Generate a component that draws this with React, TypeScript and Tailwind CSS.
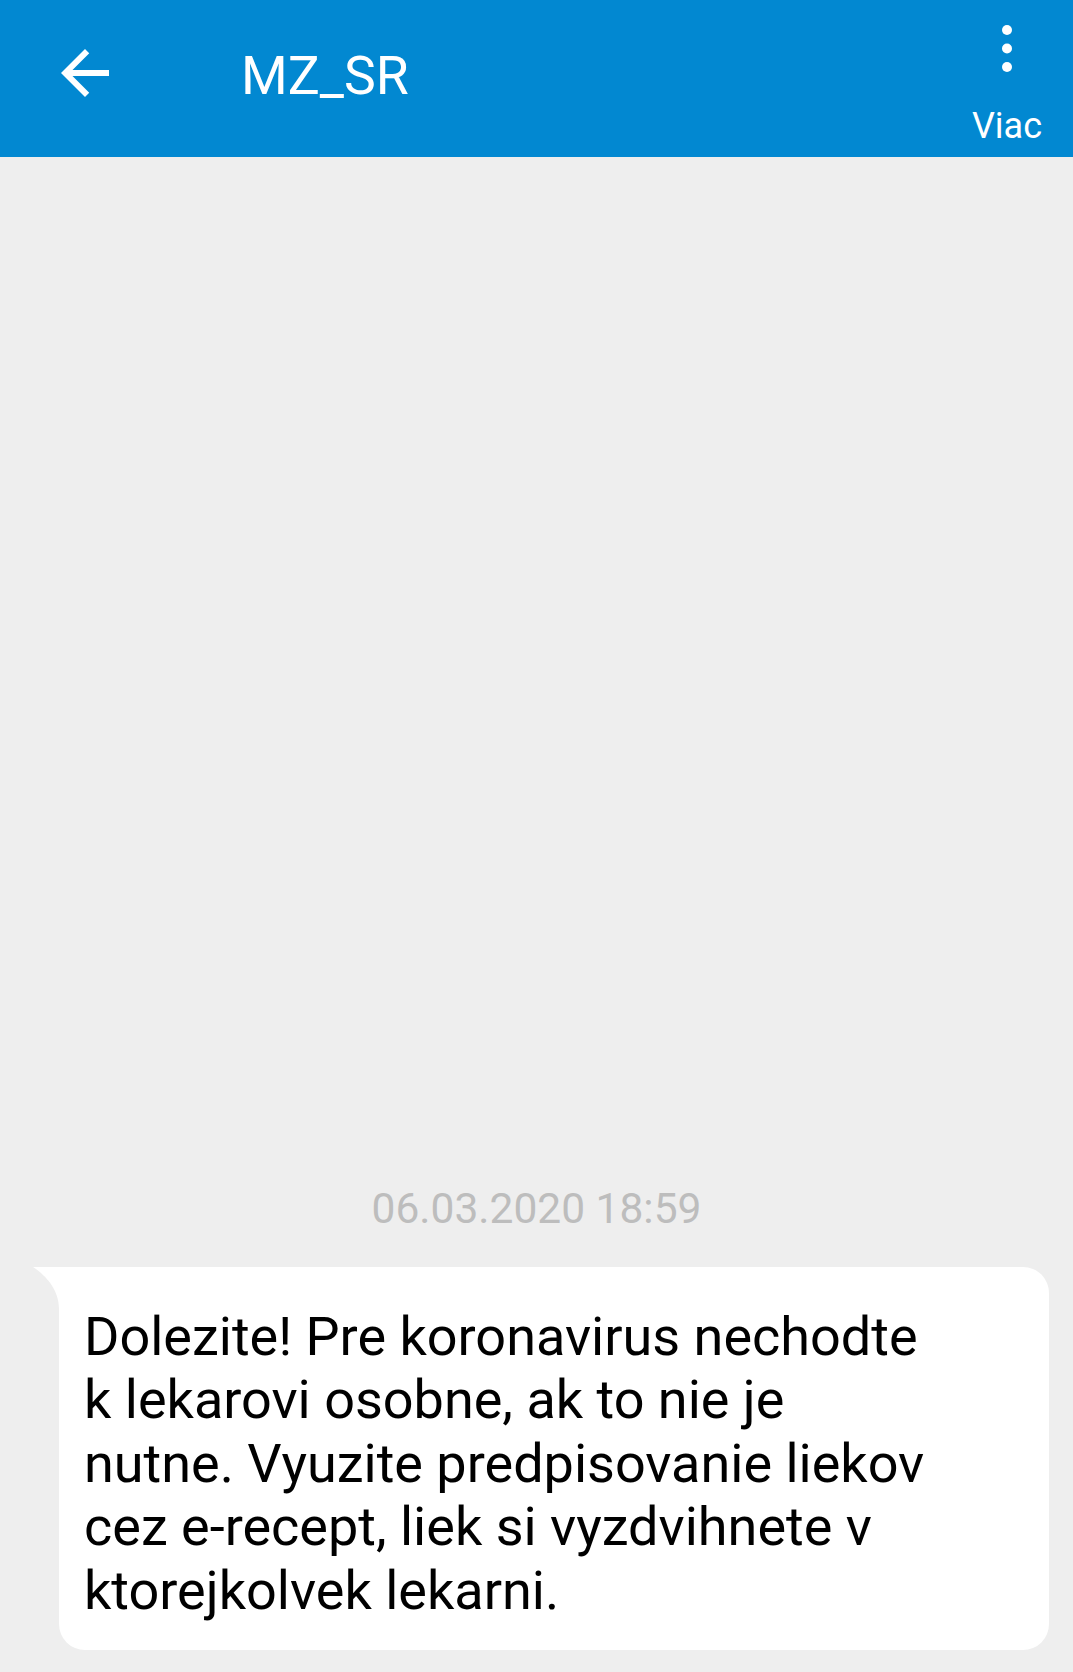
import React from "react";

const lines = [
  "Dolezite! Pre koronavirus nechodte",
  "k lekarovi osobne, ak to nie je",
  "nutne. Vyuzite predpisovanie liekov",
  "cez e-recept, liek si vyzdvihnete v",
  "ktorejkolvek lekarni.",
];

const BackArrow = () => (
  <svg width="72" height="72" viewBox="0 0 24 24" fill="white">
    <path d="M20 11H7.83l5.59-5.59L12 4l-8 8 8 8 1.41-1.41L7.83 13H20v-2z" />
  </svg>
);

const MoreDots = () => (
  <svg width="24" height="60" viewBox="0 0 24 60" fill="white">
    <circle cx="12" cy="10" r="5" />
    <circle cx="12" cy="28.5" r="5" />
    <circle cx="12" cy="47" r="5" />
  </svg>
);

// little tail on the top-left corner of an incoming bubble
const BubbleTail = () => (
  <svg
    className="absolute -left-[26px] top-0"
    width="27"
    height="42"
    viewBox="0 0 27 42"
    fill="white"
  >
    <path d="M0 0H27V42H26C26 22 12 8 0 0Z" />
  </svg>
);

export default function App() {
  return (
    <div className="flex h-[1672px] w-[1073px] flex-col bg-[#eeeeee] font-['Roboto',sans-serif]">
      {/* top bar */}
      <header className="flex h-[157px] shrink-0 items-start bg-[#0288d1] text-white">
        <div className="ml-[49px] mt-[37px]">
          <BackArrow />
        </div>
        <h1 className="ml-[120px] mt-[49px] text-[53.5px] font-normal leading-none">
          MZ_SR
        </h1>
        <div className="ml-auto mr-[16px] flex w-[100px] flex-col items-center pt-[20px]">
          <MoreDots />
          <span className="mt-[28px] text-[36px] leading-none">Viac</span>
        </div>
      </header>

      {/* conversation */}
      <main className="flex flex-1 flex-col justify-end pb-[22px]">
        <div className="text-center text-[42.5px] leading-none text-[#bdbdbd]">
          06.03.2020 18:59
        </div>

        <div className="relative ml-[59px] mr-[24px] mt-[36px] rounded-[26px] rounded-tl-none bg-white pb-[28px] pl-[25px] pt-[38px]">
          <BubbleTail />
          <p className="text-[54px] leading-[63.4px] text-black">
            {lines.map((line) => (
              <span key={line} className="block whitespace-nowrap">
                {line}
              </span>
            ))}
          </p>
        </div>
      </main>
    </div>
  );
}
